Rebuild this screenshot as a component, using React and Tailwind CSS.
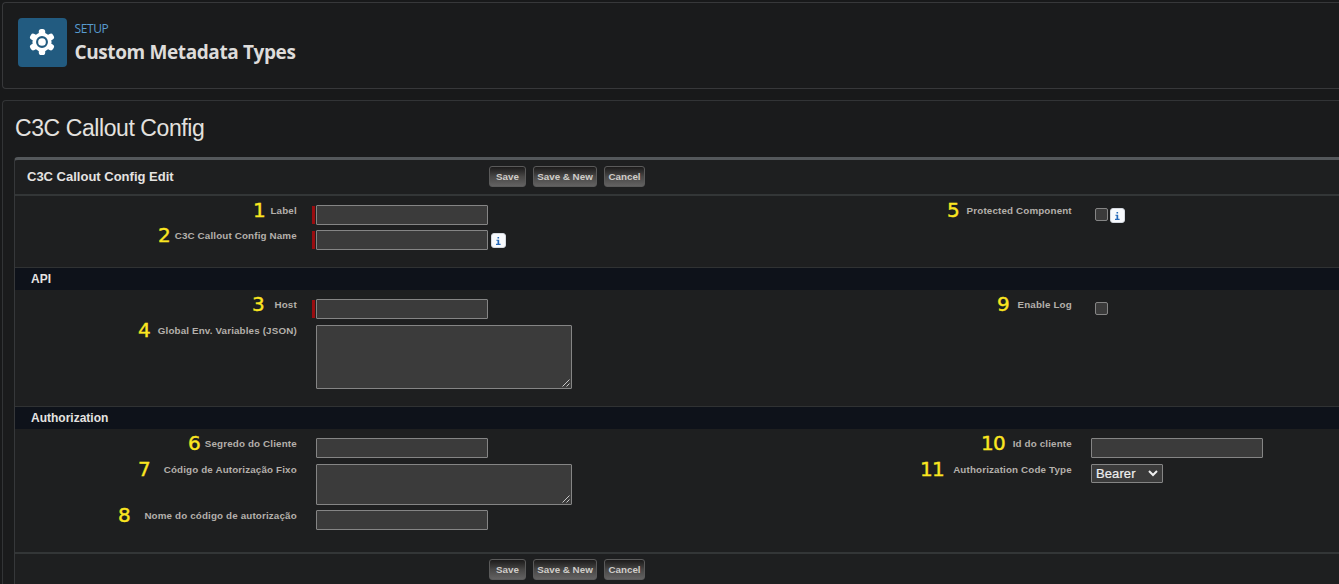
function Gear() {
  return (
    <svg viewBox="0 0 28 28" className="-mt-px -ml-px size-7" fill="none">
      <g fill="#fff">
        {[0, 60, 120].map((a) => (
          <rect key={a} x="10.8" y="0.9" width="6.4" height="26.2" rx="2.6" transform={`rotate(${a} 14 14)`} />
        ))}
        <circle cx="14" cy="14" r="9.6" />
      </g>
      <circle cx="14" cy="14" r="4.9" stroke="#225b80" strokeWidth="2.1" />
    </svg>
  );
}

function Buttons() {
  const base =
    'h-[21px] rounded-[3px] border border-[#5a5a5a] bg-linear-to-b from-[#1c1b1b] via-[#484746] to-[#636262] text-[9.8px] leading-[18px] font-bold text-[#cfccc8] whitespace-nowrap text-center';
  return (
    <div className="flex">
      <button className={`${base} w-[37px]`}>Save</button>
      <button className={`${base} ml-[7px] w-[64px]`}>Save &amp; New</button>
      <button className={`${base} ml-[7px] w-[41px]`}>Cancel</button>
    </div>
  );
}

function Label({ n, w, children }) {
  return (
    <div className={`flex h-[20px] shrink-0 items-center justify-between ${w}`}>
      <span className="font-['DejaVu_Sans'] text-[20px] leading-[20px] tracking-[-0.8px] text-[#fbe620] [-webkit-text-stroke:0.4px_#fbe620]">{n}</span>
      <span className="-mr-[0.8px] pt-[2px] text-[9.8px] leading-[12px] font-bold tracking-[0.15px] whitespace-nowrap text-[#b4b0ab]">{children}</span>
    </div>
  );
}

function Row({ n, w, label, required, className, children }) {
  return (
    <div className={`flex items-start ${className}`}>
      <div className="-mt-[5px] flex w-[281px] shrink-0 justify-end">
        <Label n={n} w={w}>{label}</Label>
      </div>
      <div className="flex w-[20px] shrink-0 justify-end pt-px pr-px">
        {required && <div className="h-[18px] w-[3px] bg-[#980d10]" />}
      </div>
      {children}
    </div>
  );
}

const field = 'block border border-[#858585] bg-[#3b3b3b] rounded-[1px] outline-none';
const Input = () => <input className={`${field} h-5 w-[172px]`} />;

function Area({ h }) {
  return (
    <div className={`${field} ${h} flex w-[256px] items-end justify-end`}>
      <svg viewBox="0 0 9 9" className="size-[9px]" stroke="#c8c8c8" strokeWidth="1">
        <path d="M0.5 7.5 7.5 0.5M4.5 7.5 7.5 4.5" />
      </svg>
    </div>
  );
}

const Check = () => <div className="mt-[3px] ml-1 size-[13px] rounded-[2px] border border-[#858585] bg-[#3b3b3b]" />;

function Info({ className }) {
  return (
    <div className={`flex size-[15px] items-center justify-center rounded-[3px] border border-[#d5d9e0] bg-[#f8fafd] ${className}`}>
      <svg viewBox="0 0 5 8" className="h-2 w-[5px]" fill="#2468b8">
        <path d="M1.5 0h1.6v1.5H1.5zM0.4 2.7h2.8v4h1.4V8H0V6.7h1.5V3.8H.4z" />
      </svg>
    </div>
  );
}

function Section({ title }) {
  return (
    <div className="h-[23px] border-t border-[#303233] bg-[#0e121a] pl-4 text-[12px] leading-[22px] font-bold text-[#e5e3e1]">{title}</div>
  );
}

export default function App() {
  return (
    <div className="h-[584px] w-full overflow-hidden bg-[#18191a] pt-[2px] pl-[2px] font-['Liberation_Sans',sans-serif]">
      <header className="flex h-[87px] rounded-l-[4px] border border-r-0 border-[#37383a] bg-[#1a1b1c] pt-[15px] pl-[15px]">
        <div className="flex size-[49px] items-center justify-center rounded-[4px] bg-[#225b80]">
          <Gear />
        </div>
        <div className="pl-[7.5px] font-['Open_Sans',sans-serif]">
          <div className="pt-[2px] text-[12px] leading-[18px] tracking-[-0.4px] text-[#589bd0]">SETUP</div>
          <h1 className="pt-[2px] text-[19px] leading-[24px] font-bold tracking-[-0.39px] whitespace-nowrap text-[#dedcda]">Custom Metadata Types</h1>
        </div>
      </header>

      <main className="mt-[11px] h-[500px] rounded-tl-[4px] border-t border-l border-[#323436] bg-[#1a1b1c] pl-3">
        <h2 className="h-[56px] pt-[13px] text-[23px] leading-[28px] tracking-[-0.42px] whitespace-nowrap text-[#e3e1df]">C3C Callout Config</h2>
        <div className="-ml-px h-[440px] rounded-tl-[4px] border-t-[3px] border-l border-t-[#54585b] border-l-[#36383a] bg-[#1e1f20]">
          <div className="flex h-[36px] border-b-2 border-[#333637] pt-[6px]">
            <h3 className="w-[474px] pl-3 text-[13px] leading-[21px] font-bold text-[#e5e3e1]">C3C Callout Config Edit</h3>
            <Buttons />
          </div>

          <div className="flex h-[71px] pt-[9px]">
            <div className="w-[775px]">
              <Row n="1" w="w-[43px]" label="Label" required className="h-[25px]"><Input /></Row>
              <Row n="2" w="w-[138px]" label="C3C Callout Config Name" required className="h-[25px]">
                <Input /><Info className="mt-[3px] ml-[3px]" />
              </Row>
            </div>
            <Row n="5" w="w-[124px]" label="Protected Component">
              <Check /><Info className="mt-[3px] ml-[2px]" />
            </Row>
          </div>

          <Section title="API" />
          <div className="flex h-[116px] pt-[9px]">
            <div className="w-[775px]">
              <Row n="3" w="w-[44px]" label="Host" required className="h-[26px]"><Input /></Row>
              <Row n="4" w="w-[158px]" label="Global Env. Variables (JSON)"><Area h="h-[64px]" /></Row>
            </div>
            <Row n="9" w="w-[74px]" label="Enable Log"><Check /></Row>
          </div>

          <Section title="Authorization" />
          <div className="flex h-[125px] border-b-2 border-[#333637] pt-[9px]">
            <div className="w-[775px]">
              <Row n="6" w="w-[108px]" label="Segredo do Cliente" className="h-[26px]"><Input /></Row>
              <Row n="7" w="w-[158px]" label="Código de Autorização Fixo" className="h-[46px]"><Area h="h-[41px]" /></Row>
              <Row n="8" w="w-[178px]" label="Nome do código de autorização"><Input /></Row>
            </div>
            <div>
              <Row n="10" w="w-[90px]" label="Id do cliente" className="h-[26px]"><Input /></Row>
              <Row n="11" w="w-[151px]" label="Authorization Code Type">
                <div className={`${field} flex h-[19px] w-[72px] items-center justify-between pr-[4px] pl-[4px] text-[13px] tracking-[0.1px] text-[#eeeeee] [-webkit-text-stroke:0.2px_#eee]`}>
                  Bearer
                  <svg viewBox="0 0 10 7" className="h-[7px] w-[10px]" fill="none" stroke="#eee" strokeWidth="2"><path d="M1 1l4 4 4-4" /></svg>
                </div>
              </Row>
            </div>
          </div>
          <div className="pt-[5px] pl-[474px]"><Buttons /></div>
        </div>
      </main>
    </div>
  );
}
